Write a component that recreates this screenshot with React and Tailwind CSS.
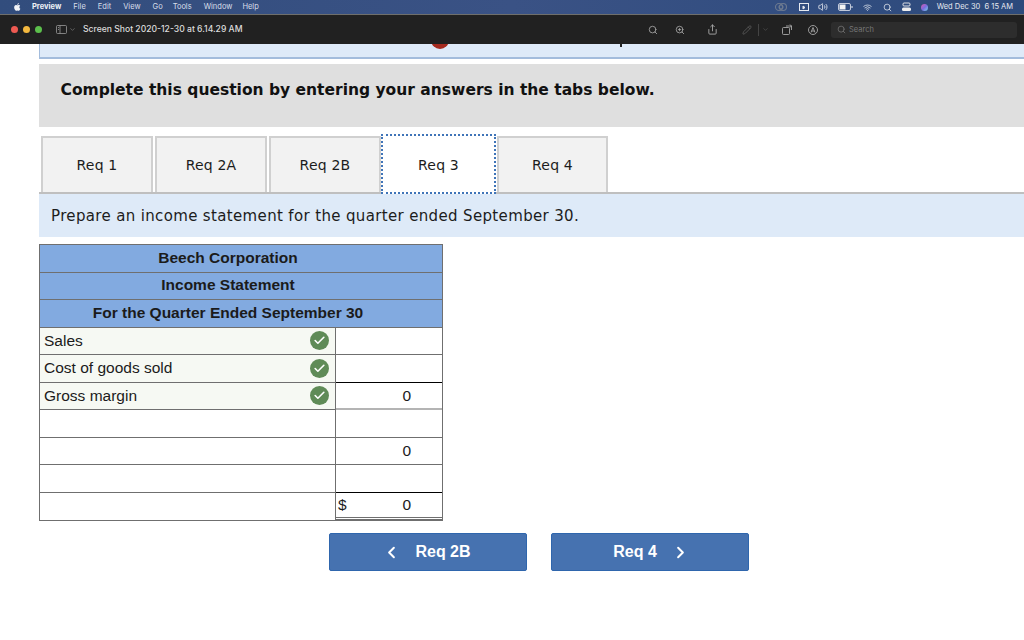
import React from "react";
import { Search, ZoomIn, Share, Pencil, ChevronDown, ChevronLeft, ChevronRight, Check, Wifi, Volume2 } from "lucide-react";

const Apple = () => (
  <svg width="9" height="10" viewBox="0 0 24 24" fill="#f2f4f8"><path d="M17.05 12.54c-.03-2.6 2.12-3.85 2.22-3.91-1.21-1.77-3.09-2.01-3.76-2.04-1.6-.16-3.12.94-3.93.94-.81 0-2.06-.92-3.39-.89-1.74.03-3.35 1.01-4.25 2.57-1.81 3.14-.46 7.8 1.3 10.35.86 1.25 1.89 2.65 3.24 2.6 1.3-.05 1.79-.84 3.36-.84 1.57 0 2.01.84 3.39.81 1.4-.02 2.28-1.27 3.14-2.53.99-1.45 1.4-2.85 1.42-2.92-.03-.01-2.72-1.04-2.74-4.14zM14.5 4.9c.72-.87 1.2-2.08 1.07-3.28-1.03.04-2.28.69-3.02 1.55-.66.77-1.24 2-1.09 3.18 1.15.09 2.33-.58 3.04-1.45z"/></svg>
);

const menu = [["File", "ml-[12px]"], ["Edit", "ml-[12px]"], ["View", "ml-[12px]"], ["Go", "ml-[12px]"], ["Tools", "ml-[10px]"], ["Window", "ml-[12px]"], ["Help", "ml-[10px]"]];

function MenuBar() {
  return (
    <div className="h-[15px] flex items-center bg-gradient-to-r from-[#324d7d] via-[#3a5285] to-[#2c4a7c] border-b border-[#6f6f6c] text-[#d9dfea] text-[7.5px] font-['Inter',sans-serif] pl-[13px] pr-[11px]">
      <Apple />
      <span className="ml-[10px] font-bold text-[#eef1f6]">Preview</span>
      {menu.map(([m, c]) => <span key={m} className={c}>{m}</span>)}
      <div className="ml-auto flex items-center text-[#e6e9f0]">
        <svg width="14" height="10" viewBox="0 0 14 10" fill="none" stroke="#6d7a90" strokeWidth="1.1"><circle cx="5" cy="5" r="3.5"/><circle cx="9" cy="5" r="3.5"/><circle cx="7" cy="5" r="2"/></svg>
        <svg className="ml-[11px]" width="10" height="8" viewBox="0 0 10 8" fill="none" stroke="#e6e9f0"><rect x=".5" y=".5" width="9" height="7"/><path d="M4 3l2 1.5L4 6z" fill="#e6e9f0"/></svg>
        <Volume2 className="ml-[9px]" size={10} />
        <svg className="ml-[10px]" width="15" height="8" viewBox="0 0 15 8"><rect x=".5" y=".5" width="12" height="7" rx="1.5" fill="none" stroke="#e6e9f0" strokeWidth=".8"/><rect x="1.5" y="1.5" width="6" height="5" fill="#f4f4f4"/><rect x="13.5" y="3" width="1" height="2" fill="#e6e9f0"/></svg>
        <Wifi className="ml-[10px]" size={9} />
        <Search className="ml-[11px]" size={9} />
        <svg className="ml-[10px]" width="9" height="10" viewBox="0 0 9 10"><rect x="1" y="1" width="7" height="3" rx="1" fill="none" stroke="#eee" strokeWidth=".9"/><rect x="0" y="5.5" width="9" height="3.5" rx="1.5" fill="#eee"/></svg>
        <span className="ml-[10px] w-[7px] h-[7px] rounded-full bg-gradient-to-br from-[#d84fa8] via-[#7b6be0] to-[#6fd0ea]"></span>
        <span className="ml-[9px] whitespace-pre">Wed Dec 30  6 15 AM</span>
      </div>
    </div>
  );
}

function TitleBar() {
  return (
    <div className="h-[29px] flex items-center bg-[#212121] text-[#dcdcdc] font-['Inter',sans-serif] pl-[11px]">
      <span className="w-[7px] h-[7px] rounded-full bg-[#ee5a52]"></span>
      <span className="ml-[5px] w-[7px] h-[7px] rounded-full bg-[#f5b93f]"></span>
      <span className="ml-[5px] w-[7px] h-[7px] rounded-full bg-[#5cc04c]"></span>
      <svg className="ml-[14px]" width="11" height="9" viewBox="0 0 11 9" fill="none" stroke="#9a9a9a" strokeWidth=".8"><rect x=".5" y=".5" width="10" height="8" rx="1"/><path d="M4 .5v8M2 2.5h1M2 4.5h1"/></svg>
      <ChevronDown className="ml-[2px] text-[#8c8c8c]" size={7} />
      <span className="ml-[7px] text-[8.6px] font-medium whitespace-nowrap">Screen Shot 2020-12-30 at 6.14.29 AM</span>
      <div className="ml-auto flex items-center text-[#a8a8a8] pr-[7px]">
        <Search size={10} />
        <ZoomIn className="ml-[17px]" size={10} />
        <Share className="ml-[22px]" size={11} />
        <Pencil className="ml-[24px] text-[#5a5a5a]" size={10} />
        <span className="ml-[6px] w-px h-[12px] bg-[#444444]"></span>
        <ChevronDown className="ml-[3px] text-[#5a5a5a]" size={7} />
        <svg className="ml-[13px]" width="11" height="11" viewBox="0 0 11 11" fill="none" stroke="#a8a8a8" strokeWidth=".9"><rect x=".5" y="3.5" width="7" height="7" rx="1"/><path d="M4 2h5.5v4M8 .5l1.5 1.5L8 3.5"/></svg>
        <svg className="ml-[15px]" width="10" height="10" viewBox="0 0 10 10" fill="none" stroke="#a8a8a8" strokeWidth=".9"><circle cx="5" cy="5" r="4.5"/><path d="M3 7.5L5 2.5l2 5M3.6 6h2.8"/></svg>
        <div className="ml-[13px] w-[186px] h-[16px] rounded-[3px] bg-[#2d2d2d] flex items-center pl-[6px] text-[#777777]">
          <Search size={9} />
          <span className="ml-[3px] text-[7.5px]">Search</span>
        </div>
      </div>
    </div>
  );
}

const tabs = ["Req 1", "Req 2A", "Req 2B", "Req 3", "Req 4"];

function Tabs() {
  return (
    <div className="mt-[9px] h-[58px] flex items-start border-b-2 border-[#bfbfbf] pl-[2px] gap-[2px] font-['DejaVu_Sans',sans-serif] text-[14px] tracking-[0.2px] text-[#1c1c1c]">
      {tabs.map((t) =>
        t === "Req 3" ? (
          <div key={t} className="relative z-10 -mt-[2px] w-[115px] -ml-[2px] -mr-px h-[60px] pt-[2px] bg-white border-2 border-dotted border-[#3f74b8] flex items-center justify-center">{t}</div>
        ) : (
          <div key={t} className={`${t === "Req 4" ? "w-[111px]" : "w-[112px]"} h-[56px] bg-[#f2f2f2] border-2 border-b-0 border-[#d0d0d0] flex items-center justify-center`}>{t}</div>
        )
      )}
    </div>
  );
}

function HeadRow({ children }) {
  return <div className="h-[27.6px] flex items-center justify-center pr-[26px] pb-[2px] bg-[#82aae0] border-b border-[#6f6f6f] font-bold text-[#1b1b1b]">{children}</div>;
}

function Row({ label, ok, value, dollar, heavy, last, soft }) {
  const valueBottom = last
    ? "border-b-[3px] border-double border-b-[#6f6f6f] pb-[1px]"
    : soft
    ? "border-b-2 border-b-[#b4b4b4]"
    : "border-b border-b-[#6f6f6f]";
  return (
    <div className="h-[27.5px] flex">
      <div className={`w-[296px] flex items-center pl-[4px] pr-[6px] pb-px border-r border-r-[#6f6f6f] ${last ? "" : "border-b border-b-[#6f6f6f]"} ${ok ? "bg-[#f6f9f3]" : "bg-white"}`}>
        <span>{label}</span>
        {ok && (
          <span className="ml-auto w-[19px] h-[19px] rounded-full bg-[#5f8b57] flex items-center justify-center text-white">
            <Check size={13} strokeWidth={3} />
          </span>
        )}
      </div>
      <div className={`flex-1 flex items-center pl-[2px] pr-[31px] ${valueBottom} ${heavy ? "border-t border-t-black -mt-px" : ""}`}>
        {dollar && <span>$</span>}
        <span className="ml-auto">{value}</span>
      </div>
    </div>
  );
}

function Statement() {
  return (
    <div className="mt-[7px] w-[404px] border border-[#6f6f6f] font-['Liberation_Sans',sans-serif] text-[15.5px] text-[#1b1b1b] bg-white">
      <HeadRow>Beech Corporation</HeadRow>
      <HeadRow>Income Statement</HeadRow>
      <HeadRow>For the Quarter Ended September 30</HeadRow>
      <Row label="Sales" ok />
      <Row label="Cost of goods sold" ok />
      <Row label="Gross margin" ok value="0" heavy soft />
      <Row />
      <Row value="0" />
      <Row />
      <Row dollar value="0" heavy last />
    </div>
  );
}

function NavButton({ children }) {
  return <div className="w-[198px] h-[38px] rounded-[2px] bg-[#4672b0] border border-[#2f66ad] text-white font-bold text-[16px] font-['Liberation_Sans',sans-serif] flex items-center justify-center">{children}</div>;
}

export default function App() {
  return (
    <div className="relative w-[1024px] h-[640px] overflow-hidden bg-white">
      <MenuBar />
      <TitleBar />
      <div className="pl-[39px]">
        <div className="relative h-[15px] bg-[#deeaf8] border-b-2 border-l border-[#a3bcdc] overflow-hidden">
          <span className="absolute left-[391px] -top-[15px] w-[18px] h-[20px] rounded-full bg-[#a52a1f]"></span>
          <span className="absolute left-[580px] top-0 w-[2px] h-[3px] bg-[#222222]"></span>
        </div>
        <div className="mt-[5px] h-[63px] bg-[#dfdfdf] flex items-center pl-[21.5px] pb-[10px] font-['DejaVu_Sans',sans-serif] font-bold text-[15.5px] text-[#111111]">
          Complete this question by entering your answers in the tabs below.
        </div>
        <Tabs />
        <div className="h-[43px] bg-[#deeaf8] flex items-center pl-[12px] pt-[2px] font-['DejaVu_Sans',sans-serif] text-[15px] tracking-[0.35px] text-[#1c1c1c]">
          Prepare an income statement for the quarter ended September 30.
        </div>
        <Statement />
        <div className="mt-[12px] ml-[290px] flex gap-[24px]">
          <NavButton><ChevronLeft className="-ml-[3px]" size={19} strokeWidth={2.5} /><span className="ml-[14px]">Req 2B</span></NavButton>
          <NavButton><span className="mr-[14px] ml-[3px]">Req 4</span><ChevronRight size={19} strokeWidth={2.5} /></NavButton>
        </div>
      </div>
    </div>
  );
}
